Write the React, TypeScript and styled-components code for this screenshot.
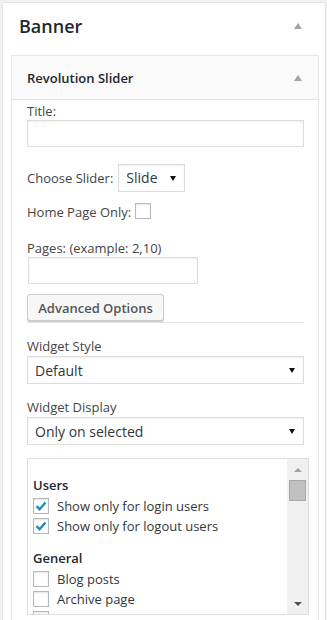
import React from 'react';
import styled, { createGlobalStyle } from 'styled-components';

const GlobalStyle = createGlobalStyle`
  html, body {
    margin: 0;
    padding: 0;
    overflow: hidden;
    background: #f1f1f1;
    font-family: "Open Sans", "Liberation Sans", sans-serif;
    font-size: 13px;
    color: #444;
  }
`;

const Panel = styled.div`
  margin: 2px 1px 0 2px;
  background: #fff;
  border: 1px solid #e5e5e5;
  border-bottom: none;
  box-shadow: 0 1px 1px rgba(0,0,0,0.04);
`;

const PanelHeader = styled.div`
  display: flex;
  align-items: center;
  justify-content: space-between;
  height: 24px;
  margin: 11px 0 17px;
  padding: 0 23px 0 16px;
`;

const PanelTitle = styled.h2`
  margin: 0;
  font-size: 18px;
  line-height: 24px;
  font-weight: 600;
  color: #23282d;
`;

const Toggle = styled.span<{ dark?: boolean }>`
  width: 0;
  height: 0;
  border-left: 4px solid transparent;
  border-right: 4px solid transparent;
  border-bottom: 6px solid ${({ dark }) => (dark ? '#72777c' : '#a0a5aa')};
`;

const Widget = styled.div`
  margin: 0 6px 0 8px;
  border: 1px solid #e5e5e5;
  border-bottom: none;
  background: #fff;
`;

const WidgetHeader = styled.div`
  display: flex;
  align-items: center;
  justify-content: space-between;
  height: 43px;
  padding: 0 16px 0 15px;
  background: #fafafa;
  border-bottom: 1px solid #e5e5e5;
`;

const WidgetTitle = styled.h3`
  margin: 0;
  font-size: 13px;
  font-weight: 600;
  color: #23282d;
`;

const WidgetBody = styled.div`
  padding: 2px 14px 30px 15px;
`;

const Label = styled.div<{ gap?: number }>`
  line-height: 18px;
  margin-top: ${({ gap }) => gap ?? 0}px;
`;

const TextInput = styled.input<{ w?: number }>`
  display: block;
  box-sizing: border-box;
  width: ${({ w }) => (w ? `${w}px` : '100%')};
  height: 27px;
  margin: 0;
  padding: 3px 5px;
  border: 1px solid #ddd;
  border-radius: 0;
  box-shadow: inset 0 1px 2px rgba(0,0,0,0.07);
  background: #fff;
  font: inherit;
  outline: none;
`;

const Row = styled.div<{ gap: number; align?: string }>`
  display: flex;
  align-items: ${({ align }) => align ?? 'center'};
  margin-top: ${({ gap }) => gap}px;
  line-height: 18px;
`;

const Select = styled.div<{ w?: number }>`
  display: flex;
  align-items: center;
  justify-content: space-between;
  box-sizing: border-box;
  width: ${({ w }) => (w ? `${w}px` : '100%')};
  height: 28px;
  padding: 0 7px 0 7px;
  border: 1px solid #ddd;
  box-shadow: inset 0 1px 2px rgba(0,0,0,0.07);
  background: #fff;
  font-size: 14px;
  color: #32373c;
`;

const Caret = styled.span`
  width: 0;
  height: 0;
  border-left: 3px solid transparent;
  border-right: 3px solid transparent;
  border-top: 5px solid #111;
  margin-right: 1px;
`;

const Box = styled.span<{ checked?: boolean }>`
  display: inline-flex;
  align-items: center;
  justify-content: center;
  box-sizing: border-box;
  width: 16px;
  height: 16px;
  flex: none;
  border: 1px solid #b4b9be;
  background: #fff;
  box-shadow: inset 0 1px 2px rgba(0,0,0,0.1);
`;

const ButtonBar = styled.div`
  margin-top: 10px;
  border-bottom: 1px solid #e5e5e5;
  padding-bottom: 0;
`;

const Button = styled.button`
  display: block;
  box-sizing: border-box;
  width: 137px;
  height: 27px;
  margin: 0 0 1px 0;
  padding: 0 10px;
  background: #f7f7f7;
  border: 1px solid #ccc;
  border-radius: 3px;
  box-shadow: 0 1px 0 #ccc;
  font: inherit;
  font-weight: 600;
  color: #555;
  cursor: pointer;
`;

const ListBox = styled.div`
  display: flex;
  width: 282px;
  height: 157px;
  box-sizing: border-box;
  margin-top: 13px;
  border: 1px solid #ddd;
  background: #fff;
  overflow: hidden;
`;

const ListContent = styled.div`
  flex: 1;
  padding: 17px 0 0 5px;
  overflow: hidden;
`;

const GroupTitle = styled.div<{ gap?: number }>`
  line-height: 18px;
  margin-top: ${({ gap }) => gap ?? 0}px;
  font-weight: 600;
  color: #23282d;
`;

const Option = styled.div`
  display: flex;
  align-items: center;
  gap: 8px;
  height: 20px;
  line-height: 20px;
  color: #32373c;
  white-space: nowrap;
`;

const Options = styled.div`
  margin-top: 2px;
`;

const Scrollbar = styled.div`
  display: flex;
  flex-direction: column;
  width: 21px;
  flex: none;
  background: #f0f0f0;
`;

const ScrollButton = styled.div`
  display: flex;
  align-items: center;
  justify-content: center;
  height: 21px;
`;

const ScrollArrow = styled.span<{ down?: boolean }>`
  width: 0;
  height: 0;
  border-left: 4px solid transparent;
  border-right: 4px solid transparent;
  ${({ down }) =>
    down ? 'border-top: 4px solid #505050;' : 'border-bottom: 4px solid #a3a3a3;'}
`;

const Thumb = styled.div`
  height: 21px;
  margin: 0 2px;
  box-sizing: border-box;
  background: #c1c1c1;
  border: 1px solid #a8a8a8;
`;

const Spacer = styled.div`
  flex: 1;
`;

const CheckMark = () => (
  <svg width="12" height="10" viewBox="0 0 12 10">
    <path d="M1.5 5.2 L4.6 8.2 L10.5 1.5" fill="none" stroke="#1e8cbe" strokeWidth="2.4" />
  </svg>
);

const CheckOption: React.FC<{ label: string; checked?: boolean }> = ({ label, checked }) => (
  <Option>
    <Box checked={checked}>{checked && <CheckMark />}</Box>
    <span>{label}</span>
  </Option>
);

export default function App() {
  return (
    <>
      <GlobalStyle />
      <Panel>
        <PanelHeader>
          <PanelTitle>Banner</PanelTitle>
          <Toggle />
        </PanelHeader>
        <Widget>
          <WidgetHeader>
            <WidgetTitle>Revolution Slider</WidgetTitle>
            <Toggle />
          </WidgetHeader>
          <WidgetBody>
            <Label>Title:</Label>
            <TextInput type="text" />

            <Row gap={17}>
              <span>Choose Slider:</span>
              <Select w={67} style={{ marginLeft: 5 }}>
                Slide
                <Caret />
              </Select>
            </Row>

            <Row gap={11} align="flex-start">
              <span>Home Page Only:</span>
              <Box style={{ marginLeft: 4 }} />
            </Row>

            <Label gap={18}>Pages: (example: 2,10)</Label>
            <TextInput type="text" w={170} style={{ marginLeft: 1 }} />

            <ButtonBar>
              <Button type="button">Advanced Options</Button>
            </ButtonBar>

            <Label gap={14}>Widget Style</Label>
            <Select style={{ marginTop: 1 }}>
              Default
              <Caret />
            </Select>

            <Label gap={14}>Widget Display</Label>
            <Select style={{ marginTop: 1 }}>
              Only on selected
              <Caret />
            </Select>

            <ListBox>
              <ListContent>
                <GroupTitle>Users</GroupTitle>
                <Options>
                  <CheckOption label="Show only for login users" checked />
                  <CheckOption label="Show only for logout users" checked />
                </Options>
                <GroupTitle gap={13}>General</GroupTitle>
                <Options>
                  <CheckOption label="Blog posts" />
                  <CheckOption label="Archive page" />
                  <CheckOption label="Search results" />
                  <CheckOption label="404 page" />
                </Options>
              </ListContent>
              <Scrollbar>
                <ScrollButton>
                  <ScrollArrow />
                </ScrollButton>
                <Thumb />
                <Spacer />
                <ScrollButton>
                  <ScrollArrow down />
                </ScrollButton>
              </Scrollbar>
            </ListBox>
          </WidgetBody>
        </Widget>
      </Panel>
    </>
  );
}
